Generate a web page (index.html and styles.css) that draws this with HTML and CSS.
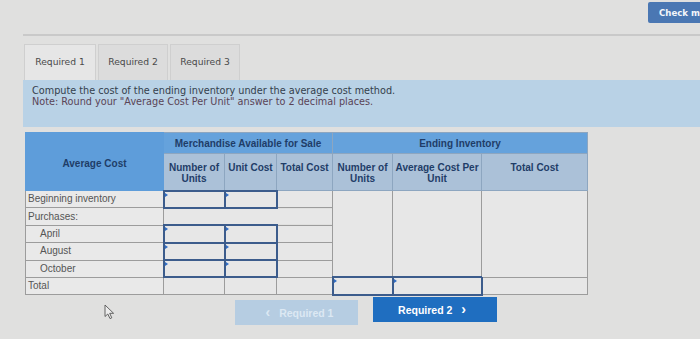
FILE: index.html
```html
<!DOCTYPE html>
<html>
<head>
<meta charset="utf-8">
<link rel="stylesheet" href="styles.css">
</head>
<body>
<div class="topbar"><button class="check">Check my work</button></div>
<div class="main">
  <div class="tabs">
    <div class="tab active">Required 1</div>
    <div class="tab">Required 2</div>
    <div class="tab">Required 3</div>
  </div>
  <div class="instr">
    <p>Compute the cost of the ending inventory under the average cost method.</p>
    <p class="note">Note: Round your "Average Cost Per Unit" answer to 2 decimal places.</p>
  </div>
  <table class="grid">
    <colgroup>
      <col class="c1"><col class="c2"><col class="c3"><col class="c4"><col class="c5"><col class="c6"><col class="c7">
    </colgroup>
    <thead>
      <tr class="h1">
        <th rowspan="2" class="avg">Average Cost</th>
        <th colspan="3">Merchandise Available for Sale</th>
        <th colspan="3">Ending Inventory</th>
      </tr>
      <tr class="h2">
        <th>Number of<br>Units</th>
        <th>Unit Cost</th>
        <th>Total Cost</th>
        <th>Number of<br>Units</th>
        <th>Average Cost Per<br>Unit</th>
        <th>Total Cost</th>
      </tr>
    </thead>
    <tbody>
      <tr>
        <td class="lbl">Beginning inventory</td>
        <td class="inp"><span class="box"></span></td>
        <td class="inp"><span class="box"></span></td>
        <td></td>
        <td rowspan="5"></td>
        <td rowspan="5"></td>
        <td rowspan="5"></td>
      </tr>
      <tr>
        <td class="lbl">Purchases:</td>
        <td colspan="3"></td>
      </tr>
      <tr>
        <td class="lbl ind">April</td>
        <td class="inp"><span class="box"></span></td>
        <td class="inp"><span class="box"></span></td>
        <td></td>
      </tr>
      <tr>
        <td class="lbl ind">August</td>
        <td class="inp"><span class="box"></span></td>
        <td class="inp"><span class="box"></span></td>
        <td></td>
      </tr>
      <tr>
        <td class="lbl ind">October</td>
        <td class="inp"><span class="box"></span></td>
        <td class="inp"><span class="box"></span></td>
        <td></td>
      </tr>
      <tr>
        <td class="lbl">Total</td>
        <td></td>
        <td></td>
        <td></td>
        <td class="inp"><span class="box"></span></td>
        <td class="inp"><span class="box"></span></td>
        <td></td>
      </tr>
    </tbody>
  </table>
  <div class="nav">
    <button class="prev"><span class="chev">&lsaquo;</span> Required 1</button>
    <button class="next">Required 2 <span class="chev">&rsaquo;</span></button>
  </div>
</div>
<svg class="cursor" width="12" height="16" viewBox="0 0 12 16">
  <path d="M1 1 L1 12.5 L3.8 10 L6 14.6 L7.8 13.8 L5.7 9.3 L9.6 9.3 Z" fill="#ececec" stroke="#555" stroke-width="0.9" stroke-linejoin="round"/>
</svg>
</body>
</html>
```
FILE: styles.css
```css
html, body {
  margin: 0;
  padding: 0;
}
body {
  width: 700px;
  height: 339px;
  overflow: hidden;
  background: #e0e0df;
  font-family: "Liberation Sans", Arial, sans-serif;
  position: relative;
}
.topbar {
  height: 34px;
  display: flex;
  justify-content: flex-end;
  align-items: flex-start;
}
.check {
  margin-top: 2px;
  margin-right: -50px;
  width: 102px;
  height: 21px;
  border: 0;
  border-radius: 2px;
  background: #4a77b3;
  color: #f2f5fa;
  font-family: "DejaVu Sans", Verdana, sans-serif;
  font-weight: bold;
  font-size: 8.6px;
  text-align: left;
  padding: 0 0 0 11px;
  white-space: nowrap;
}
.main {
  margin-left: 23px;
  border-top: 2px solid #c9c9c9;
}
.tabs {
  display: flex;
  gap: 2px;
  margin-top: 8px;
  padding-left: 1px;
}
.tab {
  height: 36px;
  box-sizing: border-box;
  border: 1px solid #cfcfcf;
  border-bottom: 0;
  background: #dcdcdc;
  font-family: "DejaVu Sans", Verdana, sans-serif;
  font-size: 9.2px;
  color: #4a4a4a;
  display: flex;
  align-items: center;
  justify-content: center;
  width: 70px;
  padding-bottom: 2px;
}
.tab.active {
  width: 72px;
  background: #e6e6e6;
}
.instr {
  background: #b9d2e6;
  height: 47px;
  box-sizing: border-box;
  padding: 6px 0 0 9px;
  font-family: "DejaVu Sans", Verdana, sans-serif;
  font-size: 9.7px;
  line-height: 10.5px;
  color: #34404c;
}
.instr p {
  margin: 0;
}
.instr .note {
  color: #5a4456;
}
.grid {
  margin: 5px 0 0 2px;
  border-collapse: collapse;
  table-layout: fixed;
  width: 562px;
  font-size: 10px;
}
.c1 { width: 138px; }
.c2 { width: 61px; }
.c3 { width: 52px; }
.c4 { width: 56px; }
.c5 { width: 60px; }
.c6 { width: 89px; }
.c7 { width: 106px; }
.grid th {
  font-weight: bold;
  color: #1f3d68;
  border: 1px solid #8da6c0;
  padding: 0;
  line-height: 11px;
}
.h1 { height: 21px; }
.h1 th {
  background: #65a2dc;
}
.h1 th.avg {
  background: #5e9dda;
  border-color: #5e9dda;
  vertical-align: top;
  padding-top: 25px;
}
.h2 { height: 37px; }
.h2 th {
  background: #abc1d8;
  vertical-align: top;
  padding-top: 8px;
}
.grid tbody tr {
  height: 17.4px;
}
.grid td {
  border: 1px solid #9c9c9c;
  background: #e7e7e7;
  padding: 0;
  color: #555;
  position: relative;
  line-height: 12px;
}
.grid td.lbl {
  padding-left: 2px;
  background: #e9e9e9;
}
.grid td.ind {
  padding-left: 14px;
}
.grid td.inp {
  border: 2px solid #3c5c8c;
}
.box {
  display: block;
  height: 12px;
}
.box::before {
  content: "";
  position: absolute;
  left: 0;
  top: 1px;
  border-left: 3px solid #2f6cc4;
  border-top: 2px solid transparent;
  border-bottom: 2px solid transparent;
}
.nav {
  display: flex;
  gap: 15px;
  margin-top: 1px;
  padding-left: 212px;
  align-items: flex-start;
}
.nav button {
  border: 0;
  height: 25px;
  font-family: "Liberation Sans", Arial, sans-serif;
  font-weight: bold;
  font-size: 10.5px;
  padding: 0;
}
.prev {
  margin-top: 3px;
  width: 123px;
  background: #b6cde2;
  color: #dce8f3;
}
.next {
  width: 124px;
  background: #1f6ec0;
  color: #ffffff;
}
.chev {
  font-size: 14px;
  margin: 0 6px;
}
.cursor {
  position: absolute;
  left: 104px;
  top: 304px;
}
```
